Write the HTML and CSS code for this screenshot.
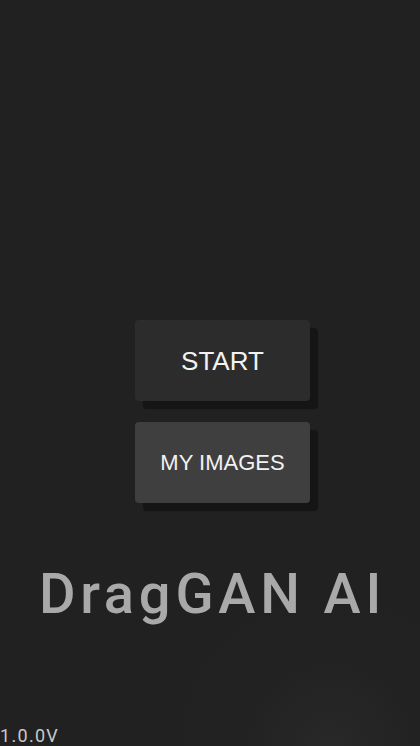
FILE: index.html
```html
<!DOCTYPE html>
<html lang="en">
<head>
<meta charset="utf-8">
<title>DragGAN AI</title>
<link rel="stylesheet" href="styles.css">
</head>
<body>
<main class="screen">
  <div class="menu">
    <button class="btn btn-start">START</button>
    <button class="btn btn-images">MY IMAGES</button>
  </div>
  <h1 class="title">DragGAN AI</h1>
  <div class="version">1.0.0V</div>
</main>
</body>
</html>
```
FILE: styles.css
```css
html, body {
  margin: 0;
  padding: 0;
  background: #212121;
}
.screen {
  width: 420px;
  height: 746px;
  display: flex;
  flex-direction: column;
  box-sizing: border-box;
  padding-top: 320px;
  background: radial-gradient(circle at 330px 746px, #282828 0, #222222 90px, #212121 160px);
  overflow: hidden;
}
.menu {
  display: flex;
  flex-direction: column;
  gap: 21px;
  padding-left: 135px;
}
.btn {
  width: 175px;
  height: 81px;
  border: none;
  border-radius: 4px;
  color: #f2f2f2;
  font-family: "Liberation Sans", Arial, sans-serif;
  box-shadow: 8px 8px 1px #151515;
  padding: 0;
  cursor: pointer;
}
.btn-start {
  background: #2c2c2c;
  font-size: 26px;
  padding-top: 1px;
}
.btn-images {
  background: #3f3f3f;
  font-size: 22px;
  padding-top: 1px;
}
.title {
  margin: 63px 0 0 0;
  padding-left: 5px;
  text-align: center;
  font-family: Roboto, "Noto Sans", sans-serif;
  font-weight: 500;
  font-size: 56px;
  line-height: 56px;
  letter-spacing: 4.8px;
  color: #a9a9a9;
}
.version {
  margin-top: auto;
  font-family: Roboto, "Noto Sans", sans-serif;
  font-size: 18px;
  line-height: 20px;
  letter-spacing: 1.3px;
  color: #c9c9c9;
}
```
